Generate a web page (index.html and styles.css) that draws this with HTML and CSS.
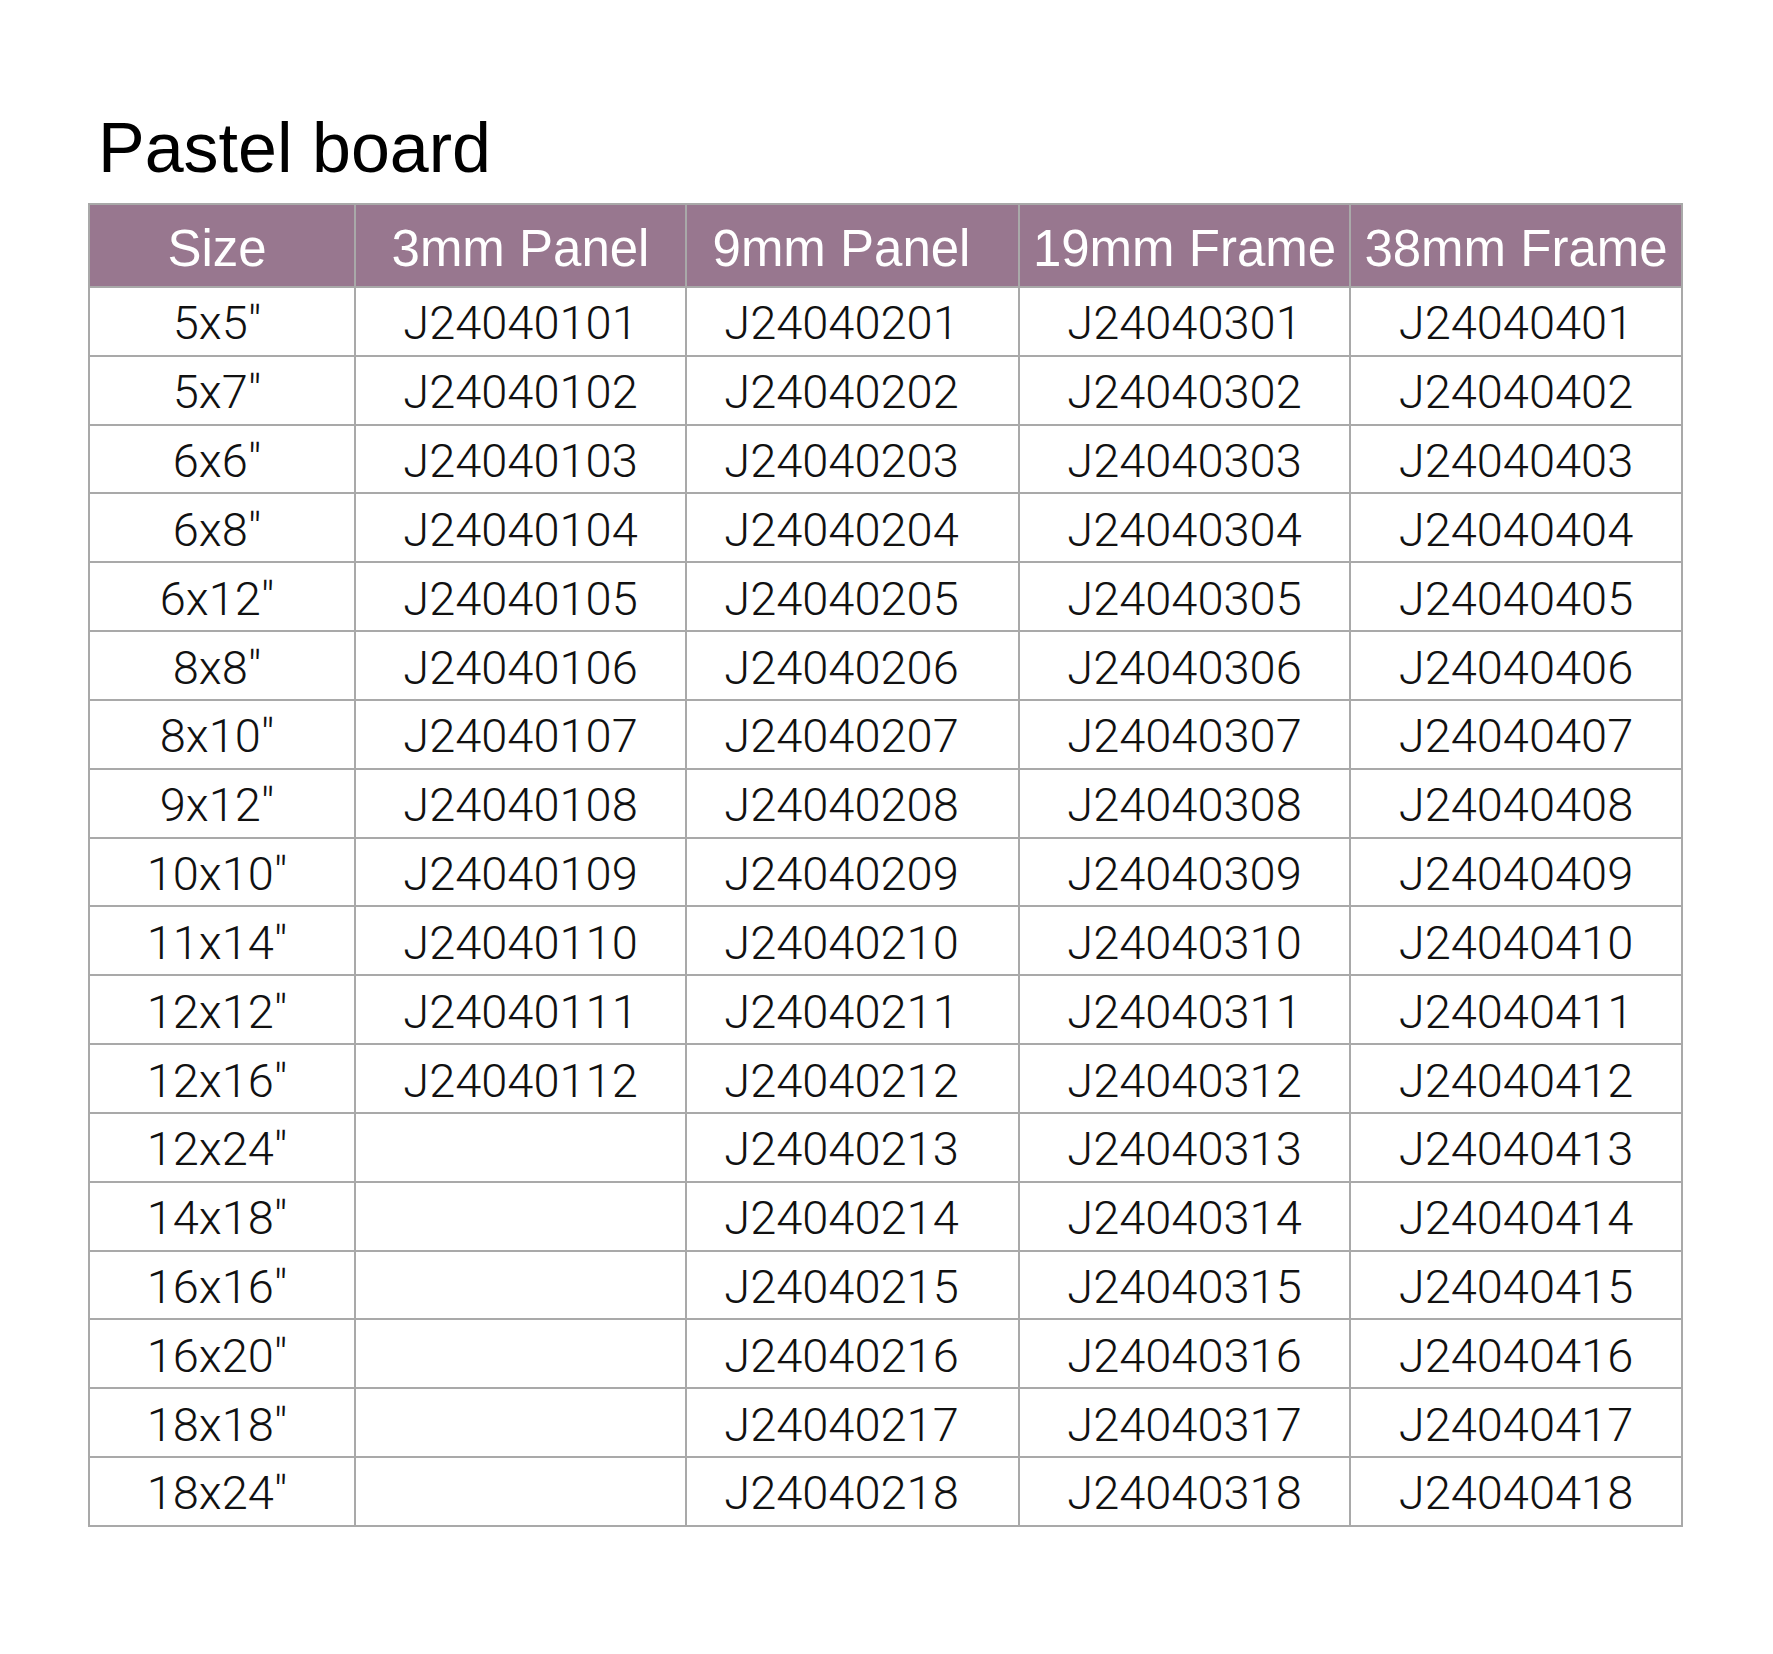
FILE: index.html
```html
<!DOCTYPE html>
<html>
<head>
<meta charset="utf-8">
<link rel="stylesheet" href="styles.css">
</head>
<body>
<div class="page">
  <h1 class="title">Pastel board</h1>
  <table class="grid">
    <colgroup>
      <col class="c1"><col class="c2"><col class="c3"><col class="c4"><col class="c5">
    </colgroup>
    <thead>
      <tr><th>Size</th><th>3mm Panel</th><th>9mm Panel</th><th>19mm Frame</th><th>38mm Frame</th></tr>
    </thead>
    <tbody>
      <tr><td>5x5"</td><td>J24040101</td><td>J24040201</td><td>J24040301</td><td>J24040401</td></tr>
      <tr><td>5x7"</td><td>J24040102</td><td>J24040202</td><td>J24040302</td><td>J24040402</td></tr>
      <tr><td>6x6"</td><td>J24040103</td><td>J24040203</td><td>J24040303</td><td>J24040403</td></tr>
      <tr><td>6x8"</td><td>J24040104</td><td>J24040204</td><td>J24040304</td><td>J24040404</td></tr>
      <tr><td>6x12"</td><td>J24040105</td><td>J24040205</td><td>J24040305</td><td>J24040405</td></tr>
      <tr><td>8x8"</td><td>J24040106</td><td>J24040206</td><td>J24040306</td><td>J24040406</td></tr>
      <tr><td>8x10"</td><td>J24040107</td><td>J24040207</td><td>J24040307</td><td>J24040407</td></tr>
      <tr><td>9x12"</td><td>J24040108</td><td>J24040208</td><td>J24040308</td><td>J24040408</td></tr>
      <tr><td>10x10"</td><td>J24040109</td><td>J24040209</td><td>J24040309</td><td>J24040409</td></tr>
      <tr><td>11x14"</td><td>J24040110</td><td>J24040210</td><td>J24040310</td><td>J24040410</td></tr>
      <tr><td>12x12"</td><td>J24040111</td><td>J24040211</td><td>J24040311</td><td>J24040411</td></tr>
      <tr><td>12x16"</td><td>J24040112</td><td>J24040212</td><td>J24040312</td><td>J24040412</td></tr>
      <tr><td>12x24"</td><td></td><td>J24040213</td><td>J24040313</td><td>J24040413</td></tr>
      <tr><td>14x18"</td><td></td><td>J24040214</td><td>J24040314</td><td>J24040414</td></tr>
      <tr><td>16x16"</td><td></td><td>J24040215</td><td>J24040315</td><td>J24040415</td></tr>
      <tr><td>16x20"</td><td></td><td>J24040216</td><td>J24040316</td><td>J24040416</td></tr>
      <tr><td>18x18"</td><td></td><td>J24040217</td><td>J24040317</td><td>J24040417</td></tr>
      <tr><td>18x24"</td><td></td><td>J24040218</td><td>J24040318</td><td>J24040418</td></tr>
    </tbody>
  </table>
</div>
</body>
</html>
```
FILE: styles.css
```css
html, body {
  margin: 0;
  padding: 0;
  background: #ffffff;
}

.page {
  padding: 110px 0 0 88px;
}

.title {
  margin: 0 0 17px 0;
  padding-left: 10px;
  font-family: "Liberation Sans", Arial, sans-serif;
  font-weight: 400;
  font-size: 70px;
  line-height: 76px;
  color: #000;
}

.grid {
  border-collapse: collapse;
  table-layout: fixed;
  width: 1593px;
}

.c1 { width: 266px; }
.c2 { width: 331px; }
.c3 { width: 333px; }
.c4 { width: 331px; }
.c5 { width: 332px; }

.grid th,
.grid td {
  border: 2px solid #a9a9a9;
  padding: 0;
  text-align: center;
  white-space: nowrap;
  overflow: hidden;
}

.grid th:nth-child(1),
.grid td:nth-child(1) {
  padding-right: 10px;
}

.grid th:nth-child(3),
.grid td:nth-child(3) {
  padding-right: 22px;
}

.grid th {
  background: #98778f;
  color: #ffffff;
  font-family: "Liberation Sans", Arial, sans-serif;
  font-weight: 400;
  font-size: 51px;
  height: 81px;
  line-height: 75px;
  padding-top: 6px;
  box-sizing: border-box;
}

.grid td {
  color: #111;
  font-family: Roboto, "Liberation Sans", sans-serif;
  font-weight: 300;
  font-size: 47px;
  height: 68.83px;
  line-height: 62px;
  padding-top: 4px;
  box-sizing: border-box;
}
```
